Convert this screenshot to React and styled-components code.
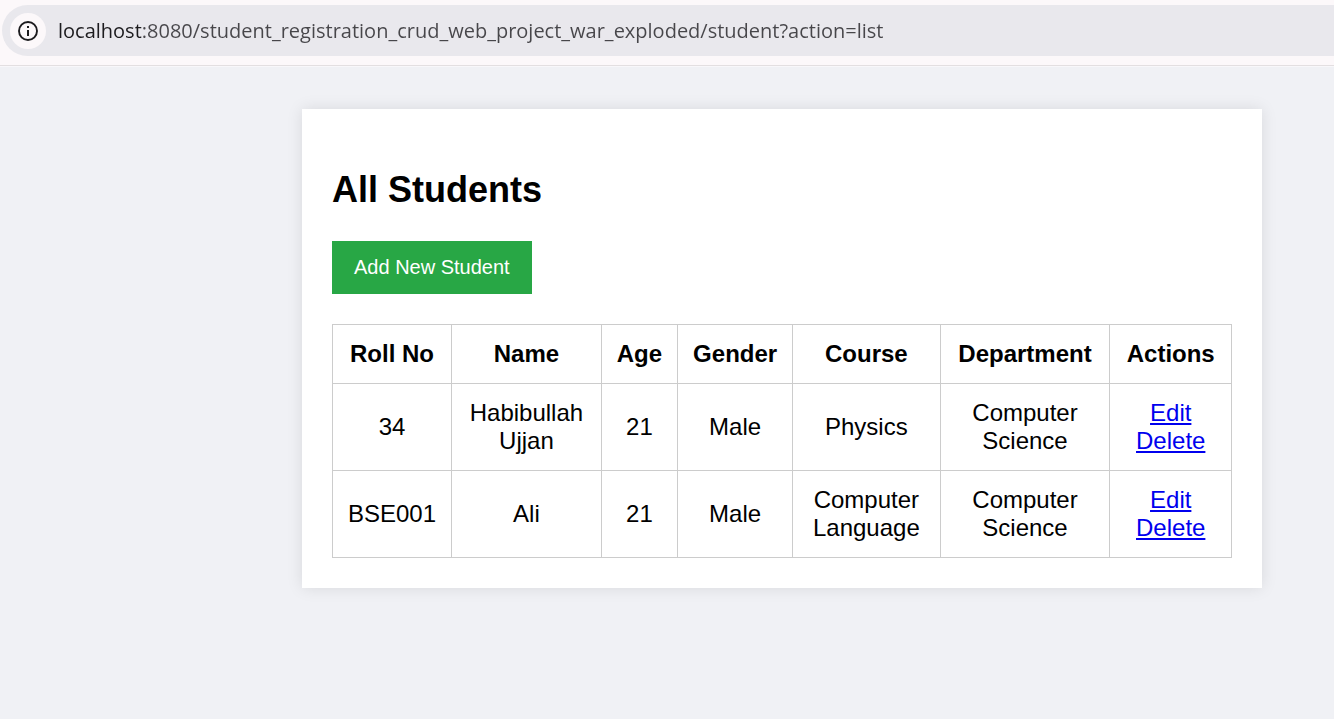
import React from "react";
import styled, { createGlobalStyle } from "styled-components";

const GlobalStyle = createGlobalStyle`
  * {
    box-sizing: border-box;
  }

  body {
    margin: 0;
    background: #f0f1f5;
    color: #000;
    font-family: Arial, "Liberation Sans", sans-serif;
    font-size: 24px;
    line-height: 28px;
  }
`;

const BrowserBar = styled.header`
  padding: 5px 0 9px 2px;
  background: #fcf8fa;
  border-bottom: 1px solid #e3dfe1;
  box-shadow: 0 1px 0 #f8f7fa;
`;

const AddressField = styled.div`
  display: flex;
  align-items: center;
  gap: 12px;
  height: 51px;
  padding-left: 8px;
  background: #e9e8ed;
  border-radius: 26px 0 0 26px;
`;

const SiteInfoButton = styled.button`
  display: flex;
  flex: none;
  align-items: center;
  justify-content: center;
  width: 36px;
  height: 36px;
  padding: 0;
  border: 0;
  border-radius: 50%;
  background: #fcf8fa;
  color: #1c1b1e;
`;

const AddressInput = styled.input`
  flex: 1;
  min-width: 0;
  height: 36px;
  padding: 0;
  border: 0;
  outline: 0;
  color: #47464a;
  background: linear-gradient(90deg, #1c1b1e 83px, #47464a 83px);
  background-clip: text;
  -webkit-text-fill-color: transparent;
  font-family: "Segoe UI", "Open Sans", sans-serif;
  font-size: 20px;
`;

const Page = styled.main`
  padding: 43px 72px 60px 302px;
`;

const Card = styled.section`
  max-width: 960px;
  padding: 30px;
  background: #fff;
  box-shadow: 0 0 15px rgba(0, 0, 0, 0.1);
`;

const Title = styled.h2`
  margin: 30px 0;
  font-size: 36px;
  line-height: 42px;
`;

const AddButton = styled.button`
  display: block;
  margin-bottom: 30px;
  padding: 15px 22px;
  border: 0;
  background: #28a745;
  color: #fff;
  font-family: inherit;
  font-size: 20px;
  line-height: 23px;
`;

const Table = styled.table`
  width: 100%;
  border-collapse: collapse;
  text-align: center;
`;

const HeadCell = styled.th`
  padding: 15px;
  border: 1px solid #ccc;
`;

const Cell = styled.td`
  padding: 15px;
  border: 1px solid #ccc;
`;

const ActionLink = styled.a`
  color: #0000ee;
  text-decoration: underline;
`;

const columns = ["Roll No", "Name", "Age", "Gender", "Course", "Department", "Actions"];

const students = [
  ["34", "Habibullah Ujjan", "21", "Male", "Physics", "Computer Science"],
  ["BSE001", "Ali", "21", "Male", "Computer Language", "Computer Science"],
];

function InfoIcon() {
  return (
    <svg width="20" height="20" viewBox="0 0 20 20" fill="none" aria-hidden="true">
      <circle cx="10" cy="10" r="9" stroke="currentColor" strokeWidth="1.9" />
      <rect x="9" y="9" width="2" height="6" fill="currentColor" />
      <rect x="9" y="5" width="2" height="2" fill="currentColor" />
    </svg>
  );
}

export default function App() {
  return (
    <>
      <GlobalStyle />
      <BrowserBar>
        <AddressField>
          <SiteInfoButton type="button" aria-label="View site information">
            <InfoIcon />
          </SiteInfoButton>
          <AddressInput
            type="text"
            aria-label="Address"
            defaultValue="localhost:8080/student_registration_crud_web_project_war_exploded/student?action=list"
          />
        </AddressField>
      </BrowserBar>
      <Page>
        <Card>
          <Title>All Students</Title>
          <AddButton type="button">Add New Student</AddButton>
          <Table>
            <thead>
              <tr>
                {columns.map((name) => (
                  <HeadCell key={name} scope="col">{name}</HeadCell>
                ))}
              </tr>
            </thead>
            <tbody>
              {students.map((student) => (
                <tr key={student[0]}>
                  {student.map((value, i) => (
                    <Cell key={columns[i]}>{value}</Cell>
                  ))}
                  <Cell>
                    <ActionLink href="#edit">Edit</ActionLink>{" "}
                    <ActionLink href="#delete">Delete</ActionLink>
                  </Cell>
                </tr>
              ))}
            </tbody>
          </Table>
        </Card>
      </Page>
    </>
  );
}
